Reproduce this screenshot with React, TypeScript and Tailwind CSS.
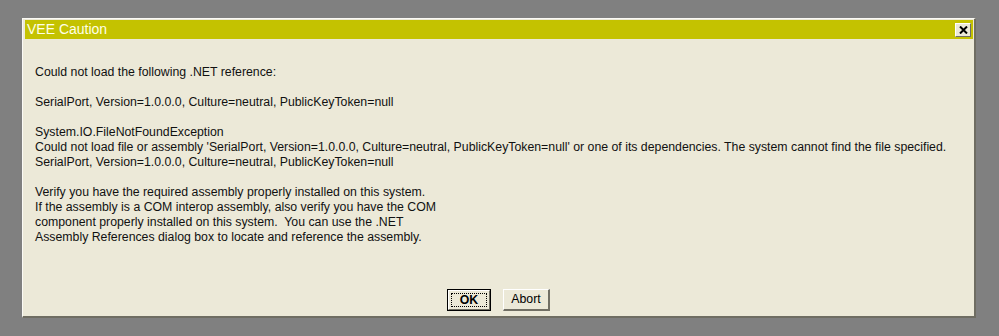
export default function App() {
  const lines = [
    "Could not load the following .NET reference:",
    "",
    "SerialPort, Version=1.0.0.0, Culture=neutral, PublicKeyToken=null",
    "",
    "System.IO.FileNotFoundException",
    "Could not load file or assembly 'SerialPort, Version=1.0.0.0, Culture=neutral, PublicKeyToken=null' or one of its dependencies. The system cannot find the file specified.",
    "SerialPort, Version=1.0.0.0, Culture=neutral, PublicKeyToken=null",
    "",
    "Verify you have the required assembly properly installed on this system.",
    "If the assembly is a COM interop assembly, also verify you have the COM",
    "component properly installed on this system.  You can use the .NET",
    "Assembly References dialog box to locate and reference the assembly.",
  ];

  return (
    <div className="w-[999px] h-[336px] bg-[#808080] pt-[18px] pl-[22px] font-['Liberation_Sans',Arial,sans-serif]">
      {/* Dialog */}
      <div className="w-[954px] h-[300px] bg-[#ece9d8] flex flex-col border-t border-l border-t-[#fbfaf5] border-l-[#fbfaf5] border-r-2 border-b-2 border-r-[#6f6d62] border-b-[#6f6d62] pt-[1px] pl-[2px] pr-[1px]">
        {/* Title bar */}
        <div className="h-[19px] bg-[#c4c200] flex items-center justify-between pl-[2px] pr-[2px]">
          <span className="text-[14px] leading-[19px] text-[#ffffe8]">VEE Caution</span>
          <button className="w-[16px] h-[14px] bg-[#ece9d8] border-t border-l border-t-white border-l-white border-r border-b border-r-[#716f64] border-b-[#716f64] flex items-center justify-center">
            <svg width="9" height="8" viewBox="0 0 9 8">
              <path d="M1 0.5 L8 7.5 M8 0.5 L1 7.5" stroke="#000" strokeWidth="2" />
            </svg>
          </button>
        </div>

        {/* Message */}
        <div className="pt-[26px] pl-[10px] text-[12.3px] leading-[15px] text-[#111]">
          {lines.map((line, i) => (
            <div key={i} className="h-[15px] whitespace-pre">
              {line}
            </div>
          ))}
        </div>

        {/* Buttons */}
        <div className="mt-auto mb-[5px] flex justify-center gap-[12px] pr-[1px]">
          <button className="w-[44px] h-[22px] border border-black bg-[#ece9d8] p-0">
            <div className="w-full h-full border-t border-l border-t-white border-l-white border-r border-b border-r-[#716f64] border-b-[#716f64] p-[2px]">
              <div className="w-full h-full border border-dotted border-black flex items-center justify-center text-[12.3px] font-bold text-black">
                OK
              </div>
            </div>
          </button>
          <button className="w-[47px] h-[22px] bg-[#ece9d8] border-t border-l border-t-white border-l-white border-r-2 border-b-2 border-r-[#716f64] border-b-[#716f64] flex items-center justify-center text-[12.3px] text-black">
            Abort
          </button>
        </div>
      </div>
    </div>
  );
}
